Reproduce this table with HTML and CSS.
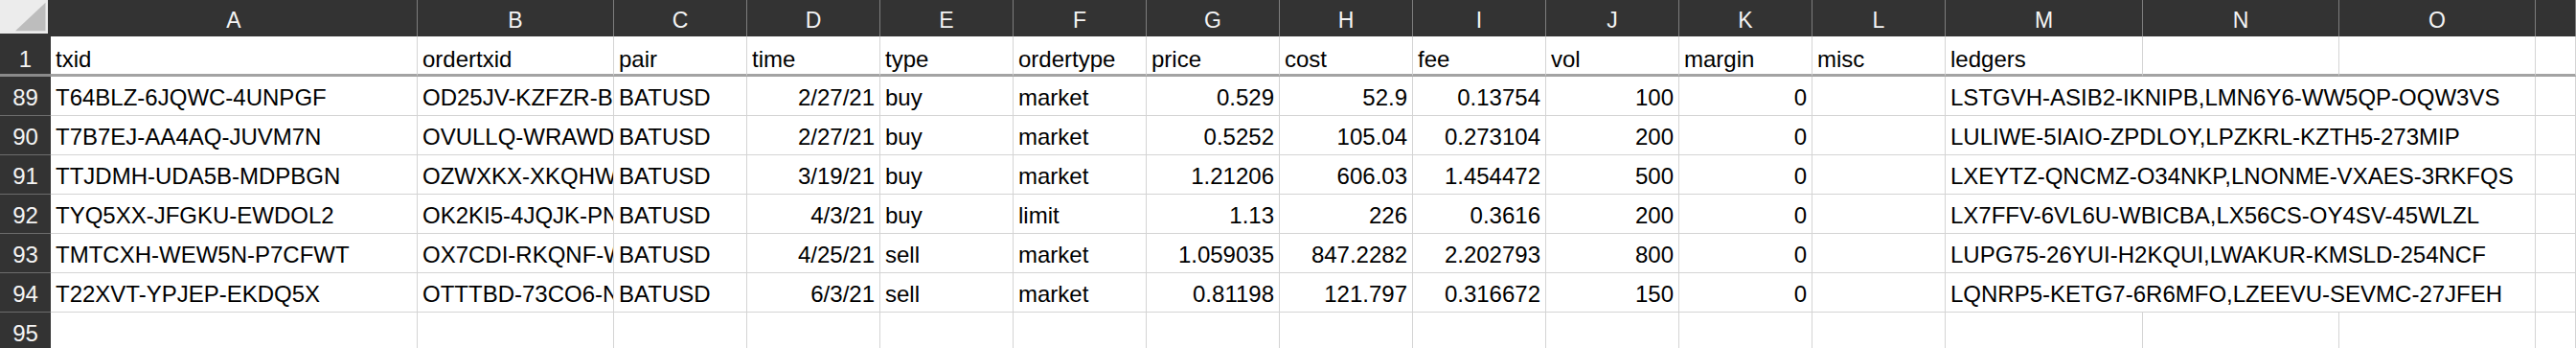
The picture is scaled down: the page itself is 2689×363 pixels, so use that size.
FILE: index.html
```html
<!DOCTYPE html>
<html lang="en">
<head>
  <meta charset="UTF-8">
  <title>ledgers - trades</title>
  <link rel="stylesheet" href="styles.css">
</head>
<body>
<div class="sheet">
  <!-- column headers -->
  <div class="corner"><div class="corner-in"></div></div>
  <div class="col">A</div>
  <div class="col">B</div>
  <div class="col">C</div>
  <div class="col">D</div>
  <div class="col">E</div>
  <div class="col">F</div>
  <div class="col">G</div>
  <div class="col">H</div>
  <div class="col">I</div>
  <div class="col">J</div>
  <div class="col">K</div>
  <div class="col">L</div>
  <div class="col">M</div>
  <div class="col">N</div>
  <div class="col">O</div>
  <div class="col"></div>

  <!-- row 1 -->
  <div class="row-num frz">1</div>
  <div class="cell frz">txid</div>
  <div class="cell frz">ordertxid</div>
  <div class="cell frz">pair</div>
  <div class="cell frz">time</div>
  <div class="cell frz">type</div>
  <div class="cell frz">ordertype</div>
  <div class="cell frz">price</div>
  <div class="cell frz">cost</div>
  <div class="cell frz">fee</div>
  <div class="cell frz">vol</div>
  <div class="cell frz">margin</div>
  <div class="cell frz">misc</div>
  <div class="cell frz">ledgers</div>
  <div class="cell frz"></div>
  <div class="cell frz"></div>
  <div class="cell frz"></div>

  <!-- row 89 -->
  <div class="row-num">89</div>
  <div class="cell">T64BLZ-6JQWC-4UNPGF</div>
  <div class="cell">OD25JV-KZFZR-BF</div>
  <div class="cell">BATUSD</div>
  <div class="cell num">2/27/21</div>
  <div class="cell">buy</div>
  <div class="cell">market</div>
  <div class="cell num">0.529</div>
  <div class="cell num">52.9</div>
  <div class="cell num">0.13754</div>
  <div class="cell num">100</div>
  <div class="cell num">0</div>
  <div class="cell"></div>
  <div class="cell wide">LSTGVH-ASIB2-IKNIPB,LMN6Y6-WW5QP-OQW3VS</div>
  <div class="cell"></div>

  <!-- row 90 -->
  <div class="row-num">90</div>
  <div class="cell">T7B7EJ-AA4AQ-JUVM7N</div>
  <div class="cell">OVULLQ-WRAWD</div>
  <div class="cell">BATUSD</div>
  <div class="cell num">2/27/21</div>
  <div class="cell">buy</div>
  <div class="cell">market</div>
  <div class="cell num">0.5252</div>
  <div class="cell num">105.04</div>
  <div class="cell num">0.273104</div>
  <div class="cell num">200</div>
  <div class="cell num">0</div>
  <div class="cell"></div>
  <div class="cell wide">LULIWE-5IAIO-ZPDLOY,LPZKRL-KZTH5-273MIP</div>
  <div class="cell"></div>

  <!-- row 91 -->
  <div class="row-num">91</div>
  <div class="cell">TTJDMH-UDA5B-MDPBGN</div>
  <div class="cell">OZWXKX-XKQHW</div>
  <div class="cell">BATUSD</div>
  <div class="cell num">3/19/21</div>
  <div class="cell">buy</div>
  <div class="cell">market</div>
  <div class="cell num">1.21206</div>
  <div class="cell num">606.03</div>
  <div class="cell num">1.454472</div>
  <div class="cell num">500</div>
  <div class="cell num">0</div>
  <div class="cell"></div>
  <div class="cell wide">LXEYTZ-QNCMZ-O34NKP,LNONME-VXAES-3RKFQS</div>
  <div class="cell"></div>

  <!-- row 92 -->
  <div class="row-num">92</div>
  <div class="cell">TYQ5XX-JFGKU-EWDOL2</div>
  <div class="cell">OK2KI5-4JQJK-PN</div>
  <div class="cell">BATUSD</div>
  <div class="cell num">4/3/21</div>
  <div class="cell">buy</div>
  <div class="cell">limit</div>
  <div class="cell num">1.13</div>
  <div class="cell num">226</div>
  <div class="cell num">0.3616</div>
  <div class="cell num">200</div>
  <div class="cell num">0</div>
  <div class="cell"></div>
  <div class="cell wide">LX7FFV-6VL6U-WBICBA,LX56CS-OY4SV-45WLZL</div>
  <div class="cell"></div>

  <!-- row 93 -->
  <div class="row-num">93</div>
  <div class="cell">TMTCXH-WEW5N-P7CFWT</div>
  <div class="cell">OX7CDI-RKQNF-W</div>
  <div class="cell">BATUSD</div>
  <div class="cell num">4/25/21</div>
  <div class="cell">sell</div>
  <div class="cell">market</div>
  <div class="cell num">1.059035</div>
  <div class="cell num">847.2282</div>
  <div class="cell num">2.202793</div>
  <div class="cell num">800</div>
  <div class="cell num">0</div>
  <div class="cell"></div>
  <div class="cell wide">LUPG75-26YUI-H2KQUI,LWAKUR-KMSLD-254NCF</div>
  <div class="cell"></div>

  <!-- row 94 -->
  <div class="row-num">94</div>
  <div class="cell">T22XVT-YPJEP-EKDQ5X</div>
  <div class="cell">OTTTBD-73CO6-N</div>
  <div class="cell">BATUSD</div>
  <div class="cell num">6/3/21</div>
  <div class="cell">sell</div>
  <div class="cell">market</div>
  <div class="cell num">0.81198</div>
  <div class="cell num">121.797</div>
  <div class="cell num">0.316672</div>
  <div class="cell num">150</div>
  <div class="cell num">0</div>
  <div class="cell"></div>
  <div class="cell wide">LQNRP5-KETG7-6R6MFO,LZEEVU-SEVMC-27JFEH</div>
  <div class="cell"></div>

  <!-- row 95 -->
  <div class="row-num">95</div>
  <div class="cell"></div>
  <div class="cell"></div>
  <div class="cell"></div>
  <div class="cell"></div>
  <div class="cell"></div>
  <div class="cell"></div>
  <div class="cell"></div>
  <div class="cell"></div>
  <div class="cell"></div>
  <div class="cell"></div>
  <div class="cell"></div>
  <div class="cell"></div>
  <div class="cell"></div>
  <div class="cell"></div>
  <div class="cell"></div>
  <div class="cell"></div>
</div>
</body>
</html>
```

FILE: styles.css
```css
* { margin: 0; padding: 0; box-sizing: border-box; }

body {
  font-family: 'Liberation Sans', Arial, sans-serif;
  background: #fff;
  color: #000;
  overflow: hidden;
}

.sheet {
  display: grid;
  grid-template-columns: 53px 383px 205px repeat(10, 139px) 206px 205px 205px 1fr;
  grid-template-rows: 38px 42px repeat(7, 41px);
}

/* top-left select-all box */
.corner {
  background: #333;
  padding: 0 3px 3px 0;
}

.corner-in {
  width: 100%;
  height: 100%;
  background: #ececec;
  position: relative;
}

.corner-in::after {
  content: '';
  position: absolute;
  inset: 0;
  background: #bdbdbd;
  clip-path: polygon(32% 92%, 95% 92%, 95% 8%);
}

/* column letters */
.col {
  background: #333;
  color: #f4f4f4;
  font-size: 23px;
  line-height: 1;
  display: flex;
  align-items: flex-end;
  justify-content: center;
  padding-bottom: 5px;
  border-right: 1px solid #7d7d7d;
}

/* row numbers */
.row-num {
  background: #333;
  color: #f4f4f4;
  font-size: 24px;
  line-height: 1;
  display: flex;
  align-items: flex-end;
  justify-content: center;
  padding-bottom: 6px;
  border-bottom: 1px solid #6c6c6c;
}

.cell {
  font-size: 24px;
  line-height: 1;
  display: flex;
  align-items: flex-end;
  padding: 0 5px 6px;
  white-space: nowrap;
  overflow: hidden;
  border-right: 1px solid #d4d4d4;
  border-bottom: 1px solid #d4d4d4;
}

.num { justify-content: flex-end; }

.wide { grid-column: span 3; }

/* frozen header row line */
.cell.frz { border-bottom: 3px solid #a3a3a3; padding-bottom: 3px; }
.row-num.frz { border-bottom: 3px solid #8a8a8a; padding-bottom: 3px; }
```
